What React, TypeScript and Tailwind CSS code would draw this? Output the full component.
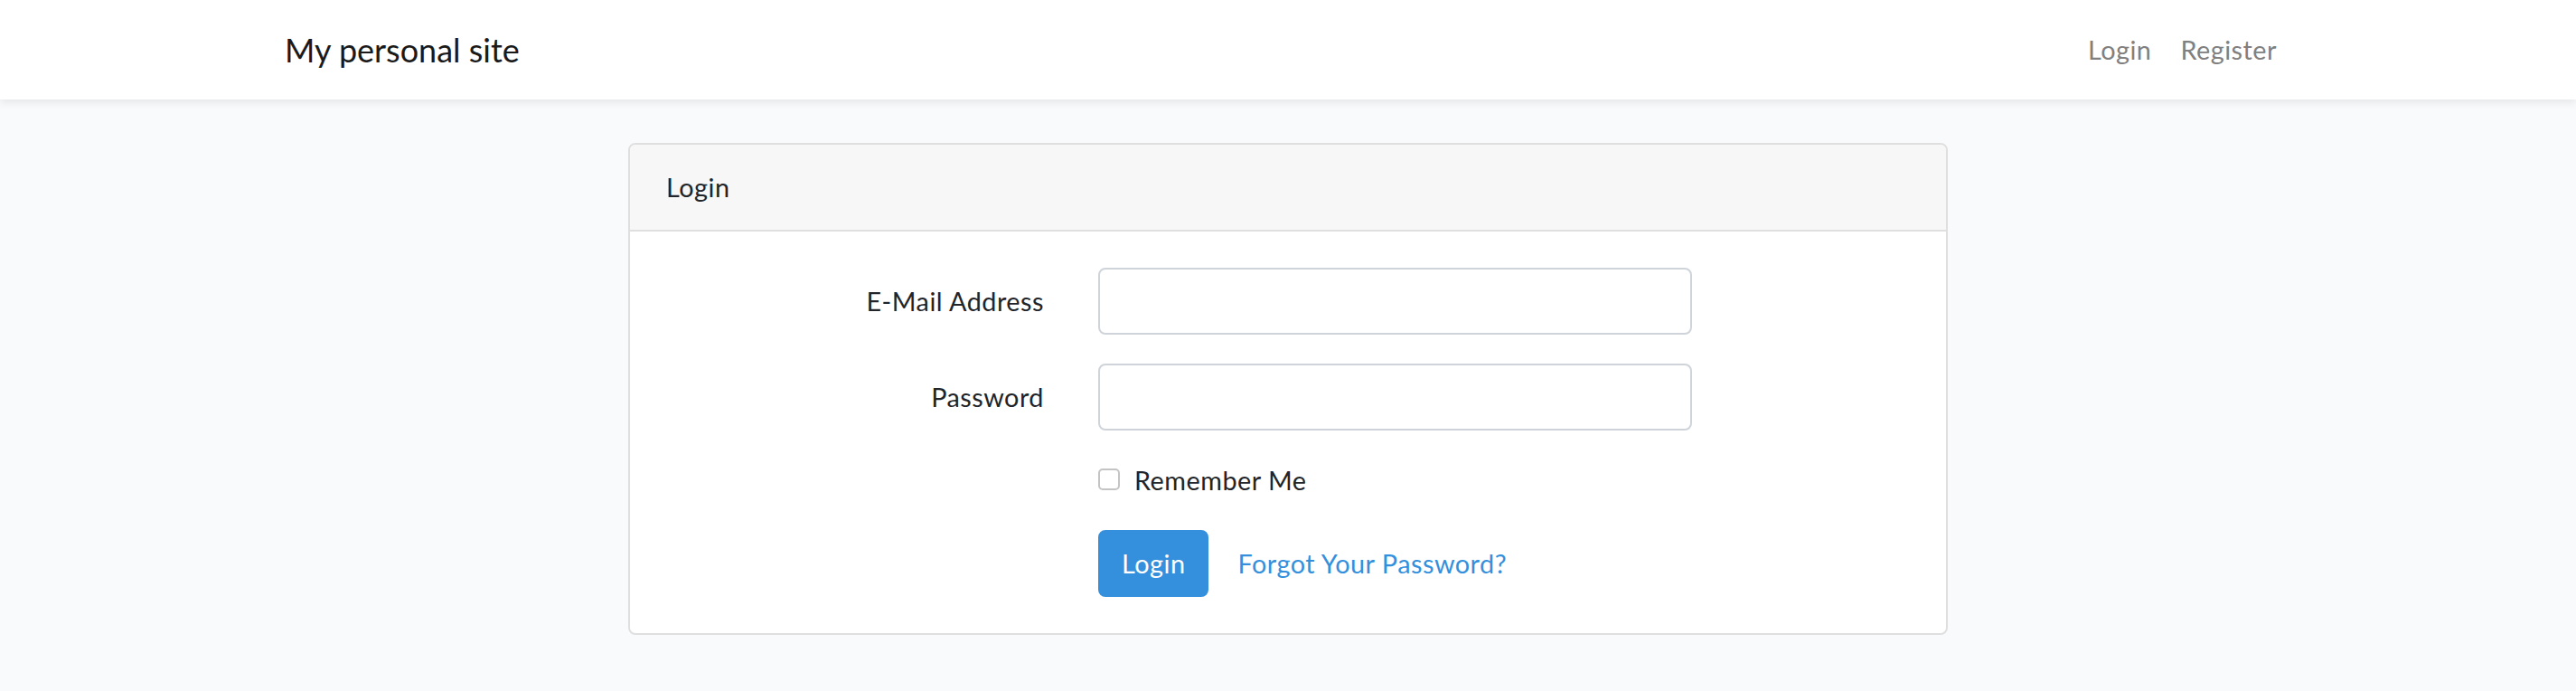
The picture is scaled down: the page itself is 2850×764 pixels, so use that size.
const font = "font-['Lato','Noto_Sans',sans-serif]";

function Field({ label, type }: { label: string; type: string }) {
  return (
    <div className="mb-[32px] flex">
      <label className="w-[418px] pt-[14px] text-right text-[28.8px] leading-[46px] tracking-[0.5px]">{label}</label>
      <div className="ml-[60px] w-[657px]">
        <input
          type={type}
          className="h-[74px] w-full rounded-[8px] border-2 border-[#ced4da] bg-white px-[24px] text-[28.8px] outline-none"
        />
      </div>
    </div>
  );
}

export default function App() {
  return (
    <div className={`min-h-screen bg-[#f8fafc] text-[#212529] ${font}`}>
      <nav className="h-[110px] bg-white shadow-[0_4px_8px_rgba(0,0,0,0.075)]">
        <div className="mx-auto flex h-full w-[2280px] items-center justify-between px-[30px]">
          <a className="text-[36px] leading-[58px] text-[#1a1a1a]" href="#">My personal site</a>
          <ul className="flex">
            <li><a className="block px-[16px] text-[28.8px] leading-[46px] tracking-[0.5px] text-[#808080]" href="#">Login</a></li>
            <li><a className="block px-[16px] text-[28.8px] leading-[46px] tracking-[0.5px] text-[#808080]" href="#">Register</a></li>
          </ul>
        </div>
      </nav>

      <main className="py-[48px]">
        <div className="mx-auto w-[1460px] overflow-hidden rounded-[8px] border-2 border-[#dfdfdf] bg-white">
          <div className="border-b-2 border-[#dfdfdf] bg-[#f7f7f7] px-[40px] py-[24px] text-[28.8px] leading-[46px] tracking-[0.5px]">Login</div>
          <div className="p-[40px]">
            <form>
              <Field label="E-Mail Address" type="email" />
              <Field label="Password" type="password" />

              <div className="mb-[32px] ml-[478px] flex items-center">
                <span className="-mt-[2px] mr-[16px] h-[24px] w-[24px] rounded-[5px] border-2 border-[#c4c4c4] bg-white" />
                <span className="text-[28.8px] leading-[46px] tracking-[0.5px]">Remember Me</span>
              </div>

              <div className="ml-[478px] flex items-center">
                <button
                  type="button"
                  className="rounded-[8px] border-2 border-[#3490dc] bg-[#3490dc] px-[24px] py-[12px] text-[28.8px] leading-[46px] tracking-[0.5px] text-white"
                >
                  Login
                </button>
                <a className="ml-[8px] px-[24px] py-[12px] text-[28.8px] leading-[46px] tracking-[0.5px] text-[#3490dc]" href="#">
                  Forgot Your Password?
                </a>
              </div>
            </form>
          </div>
        </div>
      </main>
    </div>
  );
}
